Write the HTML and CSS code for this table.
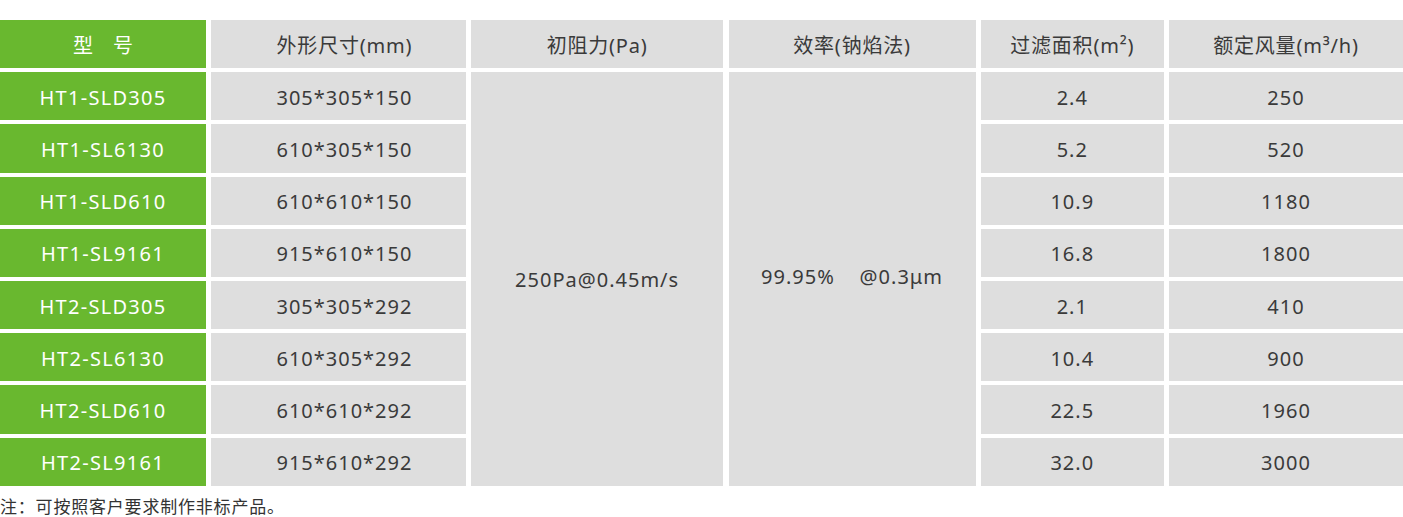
FILE: index.html
```html
<!DOCTYPE html>
<html lang="zh">
<head>
<meta charset="utf-8">
<title>产品参数</title>
<link rel="stylesheet" href="styles.css">
</head>
<body>
<div class="spec">
  <div class="cell model head">型　号</div>
  <div class="cell head size">外形尺寸(mm)</div>
  <div class="cell head">初阻力(Pa)</div>
  <div class="cell head">效率(钠焰法)</div>
  <div class="cell head">过滤面积(m²)</div>
  <div class="cell head">额定风量(m³/h)</div>

  <div class="cell model">HT1-SLD305</div>
  <div class="cell size">305*305*150</div>
  <div class="cell merged resist">250Pa@0.45m/s</div>
  <div class="cell merged eff">99.95%&nbsp;&nbsp;&nbsp;&nbsp;@0.3μm</div>
  <div class="cell">2.4</div>
  <div class="cell">250</div>

  <div class="cell model">HT1-SL6130</div>
  <div class="cell size">610*305*150</div>
  <div class="cell">5.2</div>
  <div class="cell">520</div>

  <div class="cell model">HT1-SLD610</div>
  <div class="cell size">610*610*150</div>
  <div class="cell">10.9</div>
  <div class="cell">1180</div>

  <div class="cell model">HT1-SL9161</div>
  <div class="cell size">915*610*150</div>
  <div class="cell">16.8</div>
  <div class="cell">1800</div>

  <div class="cell model">HT2-SLD305</div>
  <div class="cell size">305*305*292</div>
  <div class="cell">2.1</div>
  <div class="cell">410</div>

  <div class="cell model">HT2-SL6130</div>
  <div class="cell size">610*305*292</div>
  <div class="cell">10.4</div>
  <div class="cell">900</div>

  <div class="cell model">HT2-SLD610</div>
  <div class="cell size">610*610*292</div>
  <div class="cell">22.5</div>
  <div class="cell">1960</div>

  <div class="cell model">HT2-SL9161</div>
  <div class="cell size">915*610*292</div>
  <div class="cell">32.0</div>
  <div class="cell">3000</div>
</div>
<p class="note">注：可按照客户要求制作非标产品。</p>
</body>
</html>
```

FILE: styles.css
```css
html, body {
  margin: 0;
  padding: 0;
  background: #ffffff;
}

body {
  padding-top: 20px;
  font-family: "Noto Sans", "Noto Sans CJK SC", sans-serif;
}

.spec {
  display: grid;
  grid-template-columns: 206px 254.5px 252.5px 247px 183px 1fr;
  grid-template-rows: repeat(9, 48.2px);
  column-gap: 5.2px;
  row-gap: 4px;
}

.cell {
  background: #dedede;
  color: #3a3a3a;
  font-size: 20px;
  letter-spacing: 1px;
  display: flex;
  align-items: center;
  justify-content: center;
  white-space: nowrap;
  padding-top: 2px;
  box-sizing: border-box;
}

.cell.head {
  font-size: 20px;
  letter-spacing: 0.8px;
  padding-top: 0;
}

.cell.size {
  padding-left: 12px;
}

.cell.model {
  grid-column: 1;
  background: #69b82f;
  color: #ffffff;
  letter-spacing: 1.3px;
}

.cell.model.head {
  letter-spacing: 0;
  font-size: 20px;
}

.merged {
  grid-row: 2 / span 8;
}

.resist {
  grid-column: 3;
}

.eff {
  grid-column: 4;
  padding-top: 0;
  padding-bottom: 4px;
}

.note {
  margin: 9px 0 0;
  font-family: "Noto Sans CJK SC", sans-serif;
  font-size: 17px;
  letter-spacing: 0.8px;
  line-height: 22px;
  color: #333333;
}
```
